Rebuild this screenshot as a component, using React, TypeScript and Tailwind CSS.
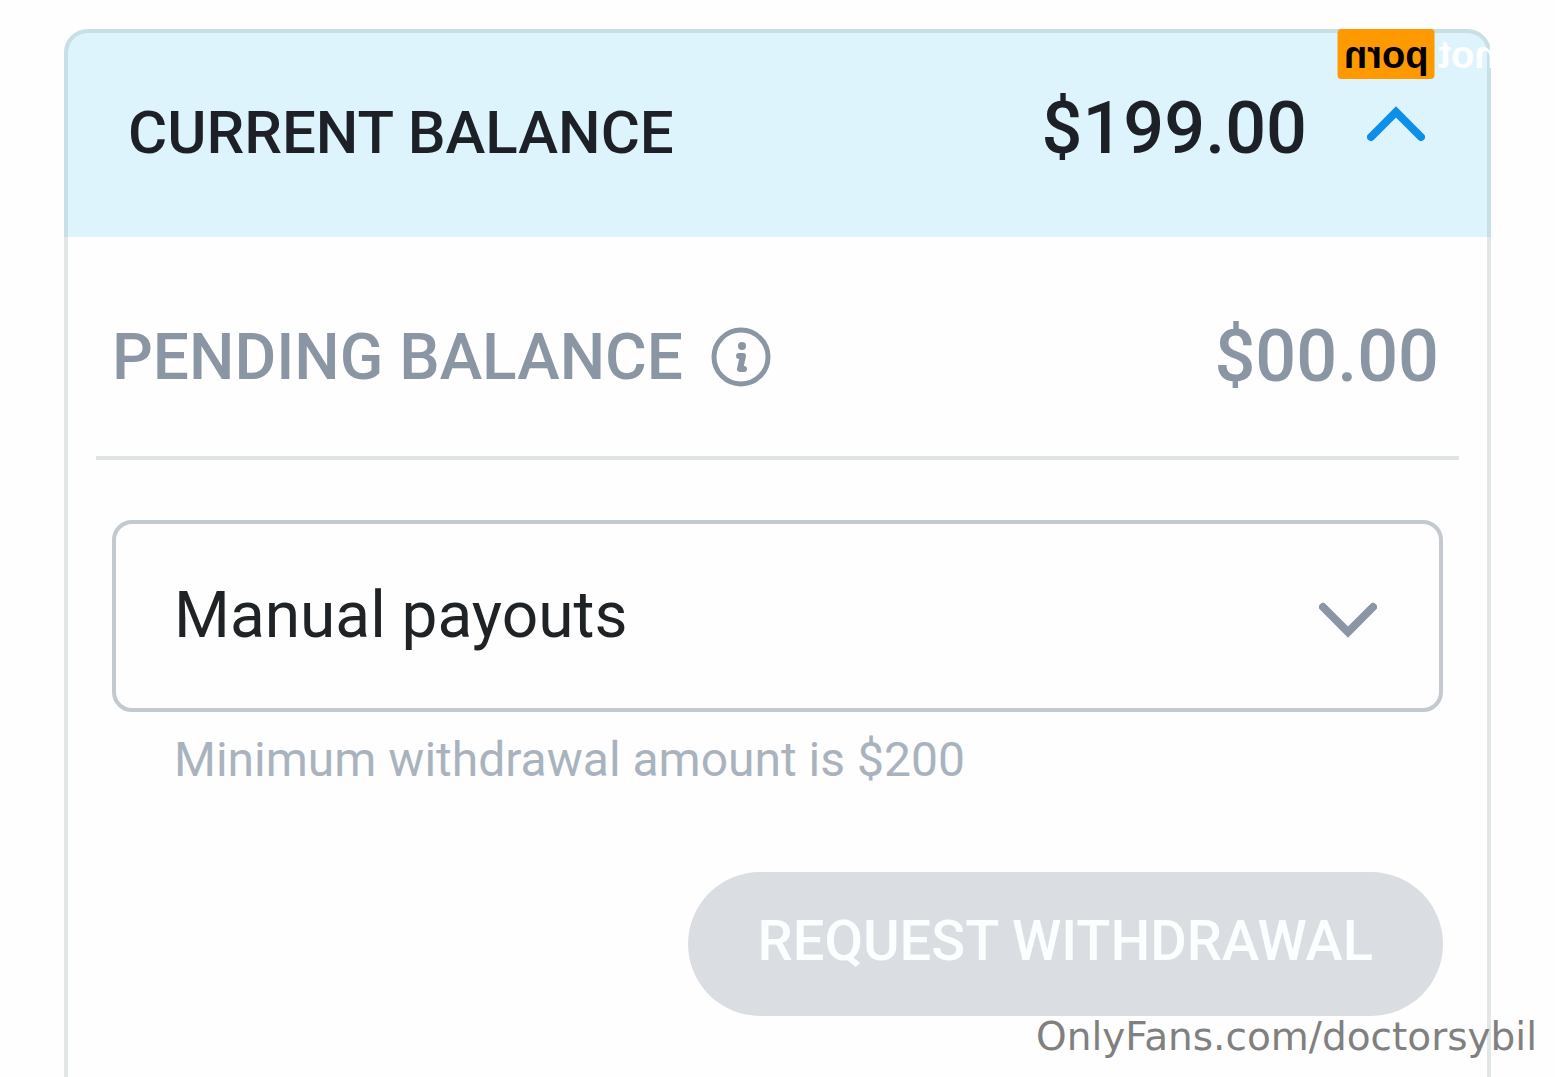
import React, { useState } from 'react';

const payoutModes = ['Manual payouts', 'Weekly payouts', 'Monthly payouts'];

function ChevronUp() {
  return (
    <svg width="58" height="44" viewBox="0 0 58 44" fill="none" stroke="#0b8fe8" strokeWidth="8" strokeLinecap="round" aria-hidden="true">
      <path d="M4 31 L29 6 L54 31" />
    </svg>
  );
}

function ChevronDown() {
  return (
    <svg width="58" height="36" viewBox="0 0 58 36" fill="none" stroke="#8a96a3" strokeWidth="8" strokeLinecap="round" aria-hidden="true">
      <path d="M4 5 L29 30 L54 5" />
    </svg>
  );
}

function InfoIcon() {
  return (
    <svg width="60" height="60" viewBox="0 0 60 60" fill="none" stroke="#8a96a3" aria-hidden="true">
      <circle cx="30" cy="30" r="27" strokeWidth="5" />
      <circle cx="31" cy="19" r="4" fill="#8a96a3" stroke="none" />
      <path d="M28 29 H32 L29 42 H33" strokeWidth="6" strokeLinecap="round" strokeLinejoin="round" />
    </svg>
  );
}

const App: React.FC = () => {
  const [mode, setMode] = useState(payoutModes[0]);

  return (
    <div className="relative flex min-h-screen flex-col overflow-hidden bg-[#fefefe] px-16 pt-[29px] font-['Roboto',sans-serif]">
      <main className="flex-1 rounded-t-3xl border-x-4 border-[#e2e6e7]">
        {/* Current balance */}
        <button
          type="button"
          aria-expanded="true"
          className="-mx-1 flex w-[calc(100%+8px)] rounded-t-3xl border-x-4 border-t-4 border-[#c9dfe6] bg-[#def4fc] pt-[60px] pr-[62px] pb-[72px] pl-[60px] text-[#1d2127]"
        >
          <span className="flex flex-1 items-baseline justify-between font-medium">
            <span className="text-[60px] leading-none">CURRENT BALANCE</span>
            <span className="text-[72px] leading-none">$199.00</span>
          </span>
          <span className="ml-[60px] flex h-[70px] items-center">
            <ChevronUp />
          </span>
        </button>

        {/* Pending balance */}
        <div className="mx-7 flex items-center justify-between border-b-4 border-[#e0e3e4] pt-[84px] pr-5 pb-[63px] pl-4 font-medium text-[#8a96a3]">
          <div className="flex items-center gap-7">
            <span className="pt-0.5 text-[64px] leading-[70px]">PENDING BALANCE</span>
            <button type="button" aria-label="About pending balance">
              <InfoIcon />
            </button>
          </div>
          <span className="text-[72px] leading-none">$00.00</span>
        </div>

        <form className="flex flex-col px-11 pt-[60px]" onSubmit={e => e.preventDefault()}>
          <div className="relative">
            <select
              aria-label="Payout mode"
              aria-describedby="payout-hint"
              value={mode}
              onChange={e => setMode(e.target.value)}
              className="block h-48 w-full appearance-none rounded-[20px] border-4 border-[#c3c9cf] bg-transparent pr-32 pl-[58px] text-[64px] text-[#202326]"
            >
              {payoutModes.map(m => (
                <option key={m}>{m}</option>
              ))}
            </select>
            <span className="pointer-events-none absolute inset-y-0 right-[66px] flex items-center pt-2">
              <ChevronDown />
            </span>
          </div>
          <p id="payout-hint" className="mt-6 pl-[62px] text-5xl leading-none text-[#a9b3be]">
            Minimum withdrawal amount is $200
          </p>
          <button
            type="submit"
            disabled
            className="mt-[88px] h-36 self-end rounded-full bg-[#dadde2] px-[70px] pb-1.5 text-[56px] leading-none font-medium text-[#fcffff]"
          >
            REQUEST WITHDRAWAL
          </button>
        </form>
      </main>

      {/* Mirrored badge */}
      <div className="absolute top-[29px] left-[1338px] flex -scale-x-100 flex-row items-center font-['Liberation_Sans',sans-serif] text-[38px] leading-[48px] font-bold">
        <span className="pt-0.5 pr-1 text-white">not</span>
        <span className="rounded-sm bg-[#ff9900] px-1.5 pt-0.5 text-black">porn</span>
      </div>

      <a
        href="#doctorsybil"
        className="absolute right-[18px] bottom-4 font-['DejaVu_Sans',sans-serif] text-[39px] leading-[48px] text-[#808080]"
      >
        OnlyFans.com/doctorsybil
      </a>
    </div>
  );
};

export default App;
